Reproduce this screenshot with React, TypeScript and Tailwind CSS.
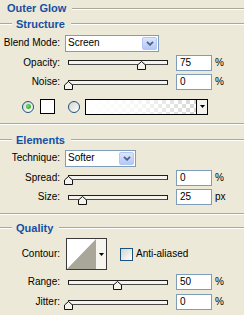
const legendText = "text-[11px] font-bold leading-none text-[#164fa3]";

function Etched({ className = "" }: { className?: string }) {
  return <div className={`h-[2px] border-t border-b border-t-[#aca899] border-b-white ${className}`} />;
}

function Legend({ title }: { title: string }) {
  return (
    <div className="flex h-[14px] items-center">
      <Etched className="w-[12px]" />
      <span className={`pl-[4px] pr-[6px] ${legendText}`}>{title}</span>
      <Etched className="flex-1" />
    </div>
  );
}

function Chevron() {
  return (
    <svg width="8" height="5" viewBox="0 0 8 5">
      <path d="M1 0.8l3 3 3-3" stroke="#4d6185" strokeWidth="1.8" fill="none" />
    </svg>
  );
}

function Select({ value, width }: { value: string; width: string }) {
  return (
    <div className={`ml-[5px] flex h-[17px] ${width} items-center border border-[#7f9db9] bg-white pl-[2px] pr-[1px]`}>
      <span className="flex-1">{value}</span>
      <span className="flex h-[13px] w-[15px] items-center justify-center rounded-[2px] border border-[#b4c6f3] bg-gradient-to-b from-[#dbe5fd] to-[#b3c8f7]">
        <Chevron />
      </span>
    </div>
  );
}

function Field({ value }: { value: string }) {
  return (
    <div className="flex h-[16px] w-[36px] items-center border border-[#7f9db9] bg-white pl-[3px]">{value}</div>
  );
}

function SliderRow({
  label,
  value,
  pos,
  unit,
  height = "h-[20px]",
}: {
  label: string;
  value: string;
  pos: number;
  unit: string;
  height?: string;
}) {
  return (
    <div className={`flex ${height} items-center`}>
      <span className="w-[60px] text-right">{label}</span>
      <div className="relative ml-[8px] h-[5px] w-[100px] border border-[#1f1f1f] border-b-[#4a4a4a] bg-[#f4f3ee]">
        <svg
          width="9"
          height="9"
          viewBox="0 0 9 9"
          className="absolute top-0"
          style={{ left: `calc(${pos}% - 5.5px)` }}
        >
          <polygon points="0.5,4 4.5,0.5 8.5,4 8.5,8.5 0.5,8.5" fill="#f4f3ee" stroke="#111" strokeWidth="1" />
        </svg>
      </div>
      <div className="ml-[8px]">
        <Field value={value} />
      </div>
      <span className="ml-[3px]">{unit}</span>
    </div>
  );
}

function Radio({ checked }: { checked?: boolean }) {
  return (
    <span className="flex h-[12px] w-[12px] items-center justify-center rounded-full border border-[#1c5180] bg-gradient-to-br from-[#d6d5cc] to-white">
      {checked && <span className="h-[5px] w-[5px] rounded-full bg-[radial-gradient(circle_at_40%_40%,#6fdc6f,#21a121)]" />}
    </span>
  );
}

function DownTri() {
  return (
    <svg width="5" height="3" viewBox="0 0 5 3">
      <polygon points="0,0 5,0 2.5,3" fill="#000" />
    </svg>
  );
}

export default function App() {
  return (
    <div className="h-[315px] w-[244px] overflow-hidden bg-[#ece9d8] font-['Liberation_Sans',Arial,sans-serif] text-[10px] leading-none text-black">
      <div className="flex h-[17px] items-center pl-[7px]">
        <span className={legendText}>Outer Glow</span>
        <Etched className="ml-[6px] flex-1" />
      </div>

      <Legend title="Structure" />
      <div className="mt-[2px] flex h-[20px] items-center">
        <span className="w-[60px] text-right">Blend Mode:</span>
        <Select value="Screen" width="w-[94px]" />
      </div>
      <SliderRow label="Opacity:" value="75" pos={75} unit="%" height="h-[19px]" />
      <SliderRow label="Noise:" value="0" pos={0} unit="%" />
      <div className="mt-[6px] flex h-[17px] items-center pl-[22px]">
        <Radio checked />
        <span className="ml-[6px] h-[15px] w-[15px] border border-black bg-white" />
        <span className="ml-[13px]">
          <Radio />
        </span>
        <div className="ml-[5px] flex h-[16px] w-[123px] border border-black">
          <div className="flex-1 bg-[repeating-conic-gradient(#d2d2d2_0%_25%,#ffffff_0%_50%)] bg-[length:8px_8px]">
            <div className="h-full w-full bg-gradient-to-r from-white via-white/80 to-white/10" />
          </div>
          <div className="flex w-[11px] items-center justify-center border-l border-black bg-[#f3f2ec]">
            <DownTri />
          </div>
        </div>
      </div>
      <Etched className="mt-[8px]" />

      <div className="mt-[8px]">
        <Legend title="Elements" />
      </div>
      <div className="mt-[1px] flex h-[20px] items-center">
        <span className="w-[60px] text-right">Technique:</span>
        <Select value="Softer" width="w-[71px]" />
      </div>
      <SliderRow label="Spread:" value="0" pos={0} unit="%" height="h-[19px]" />
      <SliderRow label="Size:" value="25" pos={15} unit="px" />
      <Etched className="mt-[6px]" />

      <div className="mt-[6px]">
        <Legend title="Quality" />
      </div>
      <div className="mt-[3px] flex h-[32px] items-center">
        <span className="w-[60px] text-right">Contour:</span>
        <div className="ml-[6px] flex h-[32px] w-[41px] border border-[#3a3a3a] bg-white">
          <svg width="29" height="30" viewBox="0 0 29 30" className="shrink-0">
            <polygon points="0,30 29,0 29,30" fill="#a9a69a" />
          </svg>
          <div className="flex flex-1 items-center justify-center bg-[#f6f5f0]">
            <DownTri />
          </div>
        </div>
        <span className="ml-[13px] h-[13px] w-[13px] border border-[#1c5180] bg-gradient-to-br from-[#d6d5cc] to-white" />
        <span className="ml-[3px]">Anti-aliased</span>
      </div>
      <div className="mt-[2px]">
        <SliderRow label="Range:" value="50" pos={50} unit="%" />
      </div>
      <SliderRow label="Jitter:" value="0" pos={0} unit="%" />
    </div>
  );
}
